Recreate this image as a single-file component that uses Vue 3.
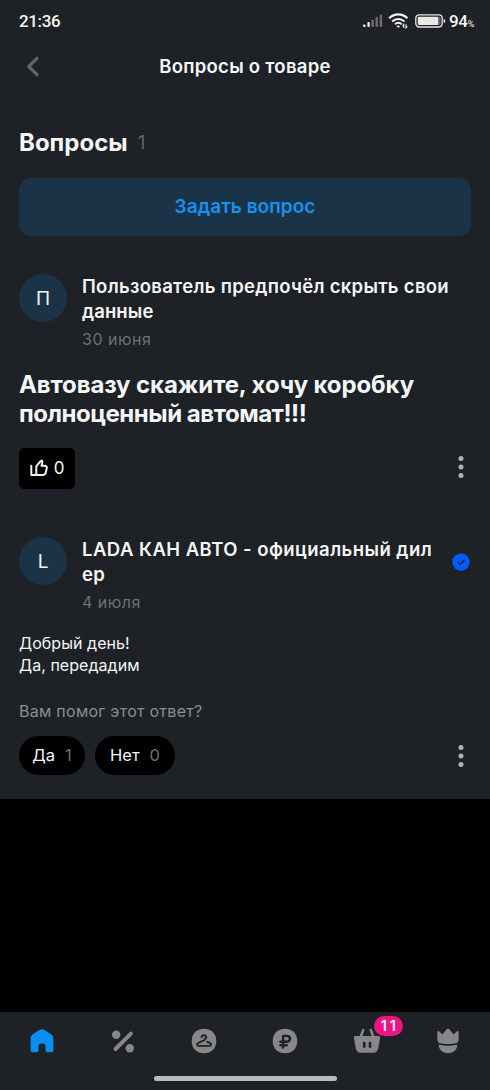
<script setup>
const answers = [
  { label: 'Да', count: 1, cls: 'yes' },
  { label: 'Нет', count: 0, cls: 'no' },
]
</script>

<template>
  <div class="screen">
    <div class="status">
      <span class="clock">21:36</span>
      <svg class="signal" width="20" height="14" viewBox="0 0 20 14">
        <rect x="0" y="10.5" width="2.6" height="2.5" rx="1" fill="#f2f2f2" />
        <rect x="4.4" y="8" width="2.4" height="5" rx="1" fill="#f2f2f2" />
        <rect x="8.4" y="5.5" width="2.4" height="7.5" rx="1" fill="#6c6e70" />
        <rect x="12.5" y="3" width="2.4" height="10" rx="1" fill="#6c6e70" />
        <rect x="16.7" y="0.5" width="2.4" height="12.5" rx="1" fill="#6c6e70" />
      </svg>
      <svg class="wifi" width="21" height="16" viewBox="0 0 21 16" fill="none" stroke="#f4f4f4">
        <path d="M1.2 5.3C6.4.1 14.2.1 19.4 5.3" stroke-width="2.1" />
        <path d="M4.2 8.5c3.6-3.3 8.6-3.3 12.2 0" stroke-width="2.1" />
        <path d="M7 11.2c2-1.7 4.6-1.7 6.6 0" stroke-width="2" />
        <path d="M8.4 13.1q1.9-1.4 3.8 0l-1.9 1.9z" fill="#f4f4f4" stroke="none" />
        <path d="M15.7 15v-3.5l-1.2 1.3M18 11.2v3.6l1.3-1.4" stroke-width="1.1" />
      </svg>
      <svg class="battery" width="31" height="14" viewBox="0 0 31 14">
        <rect x=".8" y=".8" width="26.4" height="12.2" rx="3.4" fill="none" stroke="#e8e8e8" stroke-width="1.3" />
        <rect x="2.8" y="2.8" width="20.7" height="8.2" rx="1" fill="#e8eae5" />
        <path d="M23.5 2.8h1a1 1 0 0 1 1 1V10a1 1 0 0 1-1 1h-1z" fill="#66696b" />
        <path d="M28.7 4.7q1.6.2 1.6 2.2t-1.6 2.2z" fill="#e8e8e8" />
      </svg>
      <span class="level">94<small>%</small></span>
    </div>

    <header class="bar">
      <svg class="back" width="14" height="21" viewBox="0 0 14 21">
        <path d="M11 2.3 2.7 10.5 11 18.7" fill="none" stroke="#626466" stroke-width="3.2" stroke-linecap="round" stroke-linejoin="round" />
      </svg>
      <h1>Вопросы о товаре</h1>
    </header>

    <main>
      <h2><span class="heading">Вопросы</span><span class="total">1</span></h2>
      <button class="ask">Задать вопрос</button>

      <section class="author">
        <div class="avatar">П</div>
        <div class="who">
          <div class="name"><span class="n1">Пользователь предпочёл скрыть свои</span><br><span class="n2">данные</span></div>
          <div class="date">30 июня</div>
        </div>
      </section>

      <div class="question"><span class="q1">Автовазу скажите, хочу коробку</span><br><span class="q2">полноценный автомат!!!</span></div>

      <div class="row like-row">
        <button class="like">
          <svg width="18" height="18" viewBox="0 0 18 18" fill="none" stroke="#f2f2f2" stroke-width="2" stroke-linejoin="round">
            <path d="M1.3 6.8v9.2h11.3c1.8 0 2.7-.7 3.1-2.3l1-4.2c.4-1.9-.4-2.8-2.3-2.8h-2.9l.8-3.1c.4-1.5-.5-2.700-1.700-1.500L6.300 7.400V16" stroke-linecap="round" />
          </svg>
          <span>0</span>
        </button>
        <svg class="more" width="6" height="24" viewBox="0 0 6 24" fill="#b0b1b2"><circle cx="3" cy="3.5" r="2.5" /><circle cx="3" cy="12" r="2.5" /><circle cx="3" cy="20.5" r="2.5" /></svg>
      </div>

      <section class="author second">
        <div class="avatar">L</div>
        <div class="who">
          <div class="name"><span class="n3">LADA КАН АВТО - официальный дил</span><br><span class="n4">ер</span></div>
          <div class="date">4 июля</div>
        </div>
        <svg class="verified" width="18" height="18" viewBox="0 0 18 18">
          <circle cx="9" cy="9" r="8.7" fill="#005bff" />
          <path d="m5.7 9.2 2.3 2.2 4.5-4.2" fill="none" stroke="#1b2a4c" stroke-width="1.6" stroke-linecap="round" stroke-linejoin="round" />
        </svg>
      </section>

      <div class="reply"><span class="r1">Добрый день!</span><br><span class="r2">Да, передадим</span></div>
      <div class="helped">Вам помог этот ответ?</div>

      <div class="row">
        <div class="votes">
          <button v-for="a in answers" :key="a.label" class="vote" :class="a.cls">
            <span>{{ a.label }}</span><span class="count">{{ a.count }}</span>
          </button>
        </div>
        <svg class="more" width="6" height="24" viewBox="0 0 6 24" fill="#b0b1b2"><circle cx="3" cy="3.5" r="2.5" /><circle cx="3" cy="12" r="2.5" /><circle cx="3" cy="20.5" r="2.5" /></svg>
      </div>
    </main>

    <div class="void"></div>

    <nav>
      <div class="tabs">
        <div class="tab">
          <svg width="28" height="28" viewBox="0 0 28 28" fill="#078ff4"><path d="M2.6 11.3q0-2.3 1.9-3.7L11.4 3q2.6-1.7 5.2 0l6.9 4.6q1.9 1.4 1.9 3.7v11.4q0 2.6-2.6 2.6h-3.6q-1.7 0-1.7-1.7v-4.400q0-2.600-3.500-2.600t-3.500 2.600v4.400q0 1.700-1.700 1.700H5.200q-2.600 0-2.600-2.600z" /></svg>
        </div>
        <div class="tab">
          <svg width="28" height="28" viewBox="0 0 28 28" fill="#878787"><circle cx="7.2" cy="7.7" r="4.2" /><circle cx="20.8" cy="21.2" r="4.2" /><path d="M6.6 22 21.9 6.7" stroke="#878787" stroke-width="4" stroke-linecap="round" /></svg>
        </div>
        <div class="tab">
          <svg width="28" height="28" viewBox="0 0 28 28"><path d="M14 1.7c7.4 0 12.3 4.9 12.3 12.3S21.4 26.3 14 26.3 1.7 21.4 1.7 14 6.6 1.7 14 1.7z" fill="#878787" /><path d="M11.6 10.3c0-1.3.9-2.1 2.4-2.1 2.1 0 3.1 2 1.7 3.2-.6.5-1.5.8-1.5 2M14.4 13l-6.400 3.100c-1.700.9-1.200 2.800.6 2.800h10.900c1.900 0 2.300-1.800.6-2.800l-2.700-1.300" fill="none" stroke="#1e2125" stroke-width="1.9" stroke-linecap="round" stroke-linejoin="round" /></svg>
        </div>
        <div class="tab ruble">
          <svg width="28" height="28" viewBox="0 0 28 28"><path d="M14 1.7c7.4 0 12.3 4.9 12.3 12.3S21.4 26.3 14 26.3 1.7 21.4 1.7 14 6.6 1.7 14 1.7z" fill="#878787" /><path d="M12.100 20.600V8.900h3.400c4.700 0 4.700 5.800 0 5.800H9.400M9.400 18.200h6.400" fill="none" stroke="#1e2125" stroke-width="2.4" stroke-linecap="round" stroke-linejoin="round" /></svg>
        </div>
        <div class="tab">
          <svg width="28" height="28" viewBox="0 0 28 28"><path d="M7.8 9.5 10.2 3M20.2 9.5 17.8 3" stroke="#878787" stroke-width="2.6" stroke-linecap="round" /><path d="M2.3 9h23.4q1.6 0 1.4 1.7l-1.9 10.6Q24.3 25.7 20.7 25.7H7.3q-3.6 0-4.500-4.400L.9 10.700Q.7 9 2.300 9z" fill="#878787" /><path d="M11.200 16.200v3.400M17 16.200v3.400" stroke="#1e2125" stroke-width="2.7" stroke-linecap="round" /></svg>
          <span class="badge">11</span>
        </div>
        <div class="tab">
          <svg width="28" height="28" viewBox="0 0 28 28" fill="#878787"><path d="M3.3 5.4c-.1-1.2 1-1.7 1.9-.9l3.3 3 3.9-4.9q1.6-1.7 3.2 0l3.9 4.9 3.3-3c.9-.8 2-.3 1.9.9v6.800q0 3.500-3.600 4.200-7.100 1.300-14.200 0-3.600-.7-3.600-4.200z" /><path d="M5.400 17.800q8.600 1.800 17.200 0 .9-.1.8.9-1.700 7.600-9.400 7.600T4.600 18.700q-.1-1 .8-.9z" /></svg>
        </div>
      </div>
      <div class="home-line"></div>
    </nav>
  </div>
</template>

<style>
body { background: #000; }
</style>

<style scoped>
.screen {
  width: 490px;
  height: 1090px;
  display: flex;
  flex-direction: column;
  overflow: hidden;
  box-sizing: border-box;
  background: #1e2125;
  color: #f5f6f7;
  font-family: Inter, "Noto Sans", sans-serif;
}
h1, h2 { margin: 0; }
button { border: 0; padding: 0; color: inherit; font: inherit; }
span { white-space: nowrap; }
svg { display: block; flex: none; }
.status {
  height: 42px;
  display: flex;
  align-items: center;
  padding: 0 14px 1px 19px;
  box-sizing: border-box;
  font-family: Roboto, sans-serif;
}
.clock { font-size: 17px; font-weight: 500; letter-spacing: -.35px; margin-right: auto; }
.signal { margin-right: 5px; }
.wifi { margin-right: 6px; }
.battery { margin-right: 3px; }
.level { width: 27px; font-size: 17px; font-weight: 500; letter-spacing: -.3px; }
.level small { font-size: 9px; font-weight: 400; }
.bar { height: 50px; display: grid; grid-template-columns: 70px 1fr 70px; align-items: center; }
.back { margin: 0 0 1px 26px; }
h1 { padding-bottom: 2px; font-size: 18.5px; font-weight: 600; letter-spacing: .27px; text-align: center; white-space: nowrap; }
main { height: 707px; box-sizing: border-box; padding: 36px 19px 0; }
h2 { height: 30px; line-height: 30px; display: flex; gap: 10px; font-size: 24px; }
.total { font-size: 19px; font-weight: 400; color: #5b6470; }
.ask {
  display: block;
  width: 452px;
  height: 58px;
  margin-top: 20px;
  padding-bottom: 2px;
  border-radius: 12px;
  background: #1a3347;
  color: #1593f5;
  font-size: 19px;
  font-weight: 600;
  letter-spacing: .05px;
}
.author { display: flex; margin-top: 38px; height: 77px; }
.avatar {
  flex: none;
  width: 48px;
  height: 48px;
  border-radius: 50%;
  background: #1a3347;
  display: flex;
  align-items: center;
  justify-content: center;
  font-size: 19px;
}
.who { margin-left: 15px; flex: 1; }
.name { font-size: 18.5px; line-height: 25px; font-weight: 600; letter-spacing: .3px; }
.n2 { letter-spacing: .1px; }
.n3 { letter-spacing: .45px; }
.date { margin-top: 4px; line-height: 22px; font-size: 16px; letter-spacing: .5px; color: #6d7176; }
.question { margin-top: 19px; font-size: 24px; line-height: 29px; font-weight: 700; letter-spacing: -.12px; }
.q2 { letter-spacing: -.47px; }
.row { display: flex; justify-content: space-between; align-items: center; }
.more { margin-right: 7px; }
.like-row { margin-top: 20px; height: 41px; }
.like-row .more { margin-bottom: 3px; }
.like {
  width: 56px;
  height: 41px;
  border-radius: 5px;
  background: #000;
  display: flex;
  align-items: center;
  justify-content: center;
  gap: 6px;
  padding-bottom: 1px;
  font-size: 17px;
}
.second { margin-top: 48px; }
.verified { margin: 16px 1px 0 0; }
.reply { margin-top: 18px; font-size: 16px; line-height: 22px; letter-spacing: .05px; }
.helped { margin-top: 24px; line-height: 22px; font-size: 16px; letter-spacing: .27px; color: #8b8d90; }
.votes { display: flex; gap: 10px; }
.row:last-child { margin-top: 14px; height: 39px; }
.vote {
  height: 39px;
  border-radius: 20px;
  background: #000;
  display: flex;
  align-items: center;
  justify-content: center;
  gap: 10px;
  padding-bottom: 1px;
  font-size: 16.5px;
}
.yes { width: 66px; }
.no { width: 80px; }
.count { color: #6d7176; }
.void { flex: 1; background: #000; }
nav { height: 78px; display: flex; flex-direction: column; align-items: center; }
.tabs { width: 490px; height: 64px; display: grid; grid-template-columns: repeat(6, 81.3px); justify-content: center; }
.tab { position: relative; display: flex; justify-content: center; padding-top: 15px; }
.ruble { padding-right: 1px; }
.badge {
  position: absolute;
  left: 48px;
  top: 4px;
  width: 29px;
  height: 20px;
  border-radius: 10px;
  background: #ef1484;
  color: #fff;
  text-align: center;
  text-indent: 2px;
  font: 600 14.5px/20px Inter, sans-serif;
  letter-spacing: 2.8px;
}
.home-line { width: 183px; height: 5px; border-radius: 3px; background: #b9babc; }
</style>
